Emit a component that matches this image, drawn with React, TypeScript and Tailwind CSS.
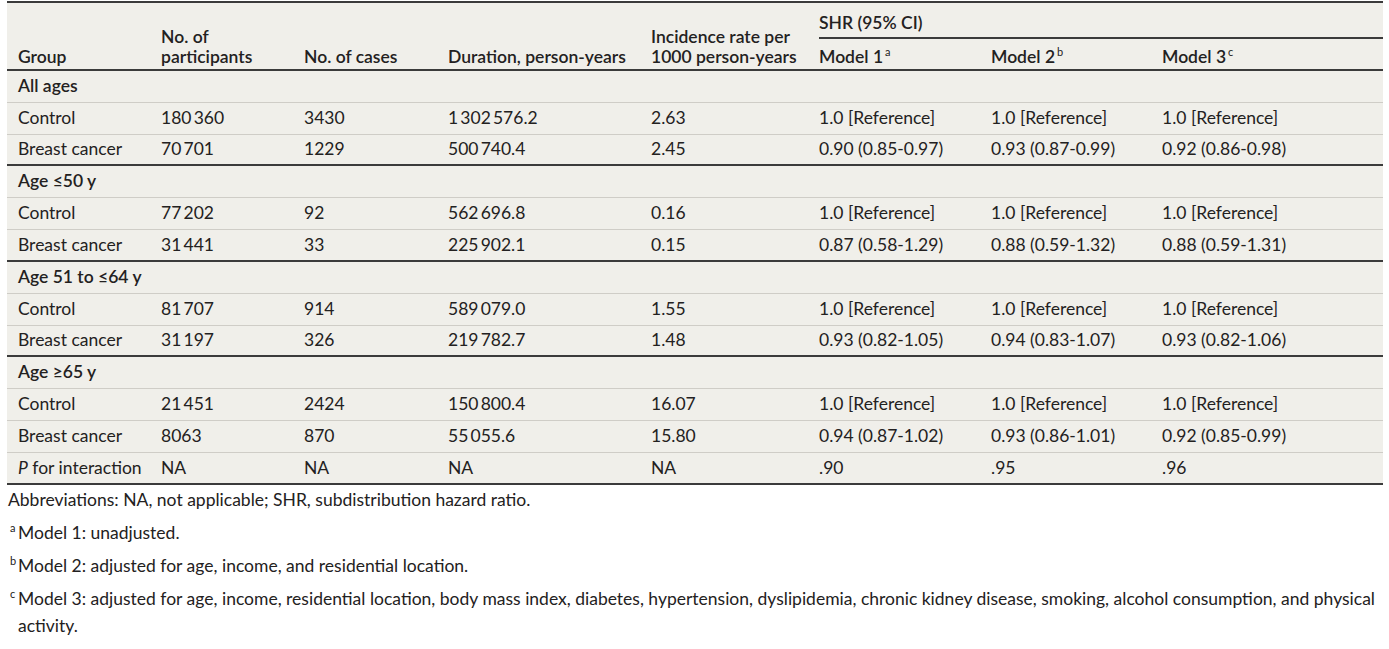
import React from "react";

const REF = "1.0 [Reference]";

type Section = { label: string; rows: string[][] };

const sections: Section[] = [
	{
		label: "All ages",
		rows: [
			["Control", "180\u2009360", "3430", "1\u2009302\u2009576.2", "2.63", REF, REF, REF],
			["Breast cancer", "70\u2009701", "1229", "500\u2009740.4", "2.45", "0.90 (0.85-0.97)", "0.93 (0.87-0.99)", "0.92 (0.86-0.98)"],
		],
	},
	{
		label: "Age ≤50 y",
		rows: [
			["Control", "77\u2009202", "92", "562\u2009696.8", "0.16", REF, REF, REF],
			["Breast cancer", "31\u2009441", "33", "225\u2009902.1", "0.15", "0.87 (0.58-1.29)", "0.88 (0.59-1.32)", "0.88 (0.59-1.31)"],
		],
	},
	{
		label: "Age 51 to ≤64 y",
		rows: [
			["Control", "81\u2009707", "914", "589\u2009079.0", "1.55", REF, REF, REF],
			["Breast cancer", "31\u2009197", "326", "219\u2009782.7", "1.48", "0.93 (0.82-1.05)", "0.94 (0.83-1.07)", "0.93 (0.82-1.06)"],
		],
	},
	{
		label: "Age ≥65 y",
		rows: [
			["Control", "21\u2009451", "2424", "150\u2009800.4", "16.07", REF, REF, REF],
			["Breast cancer", "8063", "870", "55\u2009055.6", "15.80", "0.94 (0.87-1.02)", "0.93 (0.86-1.01)", "0.92 (0.85-0.99)"],
		],
	},
];

const colWidths = [143, 143, 144, 203, 168, 172, 171, 232];

const Sup = ({ children }: { children: React.ReactNode }) => (
	<sup className="text-[11px] font-normal top-[-0.6em] ml-[2px]">{children}</sup>
);

const Footnote = ({ mark, children }: { mark: string; children: React.ReactNode }) => (
	<div className="flex mt-[6px]">
		<span className="w-[11px] shrink-0 pl-[3px] text-[11px] leading-[18px]">{mark}</span>
		<p>{children}</p>
	</div>
);

export default function App() {
	const lastSection = sections.length - 1;
	return (
		<div className="w-[1389px] h-[649px] bg-white text-[#232121] text-[17.5px] font-['Lato','Liberation_Sans',sans-serif] overflow-hidden">
			<div className="pl-[7px] pt-[1px] w-[1383px]">
				<table className="table-fixed border-collapse w-[1376px] bg-[#f0efea] leading-[20px]">
					<colgroup>
						{colWidths.map((w, i) => (
							<col key={i} style={{ width: w }} />
						))}
					</colgroup>
					<thead>
						<tr className="border-t-2 border-b-2 border-[#3b3b3b] text-left align-bottom">
							<th className="pl-[11px] pb-[2px] font-semibold">Group</th>
							<th className="pl-[11px] pb-[2px] font-semibold">
								No. of
								<br />
								participants
							</th>
							<th className="pl-[11px] pb-[2px] font-semibold">No. of cases</th>
							<th className="pl-[11px] pb-[2px] font-semibold whitespace-nowrap">Duration, person-years</th>
							<th className="pl-[11px] pb-[2px] font-semibold whitespace-nowrap">
								Incidence rate per
								<br />
								1000 person-years
							</th>
							<th colSpan={3} className="pl-[11px] pb-[2px] pt-[10px] font-semibold">
								<div className="border-b-2 border-[#3b3b3b] pb-[4px]">SHR (95% CI)</div>
								<div className="grid grid-cols-[172px_171px_1fr] pt-[8px]">
									<span>
										Model 1<Sup>a</Sup>
									</span>
									<span>
										Model 2<Sup>b</Sup>
									</span>
									<span>
										Model 3<Sup>c</Sup>
									</span>
								</div>
							</th>
						</tr>
					</thead>
					<tbody>
						{sections.map((s, si) => (
							<React.Fragment key={s.label}>
								<tr className="h-[32px] border-b border-[#cfcdc7]">
									<td colSpan={8} className="pl-[11px] font-semibold">
										{s.label}
									</td>
								</tr>
								{s.rows.map((r, ri) => {
									const lastRow = ri === s.rows.length - 1;
									const border =
										lastRow && si !== lastSection
											? "border-b-2 border-[#3b3b3b]"
											: "border-b border-[#cfcdc7]";
									// a few rows a pixel shorter to keep the 31.8px pitch
									const h = lastRow && (si === 0 || si === 2) ? "h-[31px]" : "h-[32px]";
									return (
										<tr key={ri} className={`${h} ${border}`}>
											{r.map((c, ci) => (
												<td key={ci} className="pl-[11px] whitespace-nowrap">
													{c}
												</td>
											))}
										</tr>
									);
								})}
							</React.Fragment>
						))}
						<tr className="h-[32px] border-b-2 border-[#3b3b3b]">
							<td className="pl-[11px] whitespace-nowrap">
								<i>P</i> for interaction
							</td>
							<td className="pl-[11px]">NA</td>
							<td className="pl-[11px]">NA</td>
							<td className="pl-[11px]">NA</td>
							<td className="pl-[11px]">NA</td>
							<td className="pl-[11px]">.90</td>
							<td className="pl-[11px]">.95</td>
							<td className="pl-[11px]">.96</td>
						</tr>
					</tbody>
				</table>
				<div className="leading-[27px] pr-[4px] pt-[1px]">
					<p className="pl-[1px]">Abbreviations: NA, not applicable; SHR, subdistribution hazard ratio.</p>
					<Footnote mark="a">Model 1: unadjusted.</Footnote>
					<Footnote mark="b">Model 2: adjusted for age, income, and residential location.</Footnote>
					<Footnote mark="c">
						Model 3: adjusted for age, income, residential location, body mass index, diabetes, hypertension,
						dyslipidemia, chronic kidney disease, smoking, alcohol consumption, and physical activity.
					</Footnote>
				</div>
			</div>
		</div>
	);
}
